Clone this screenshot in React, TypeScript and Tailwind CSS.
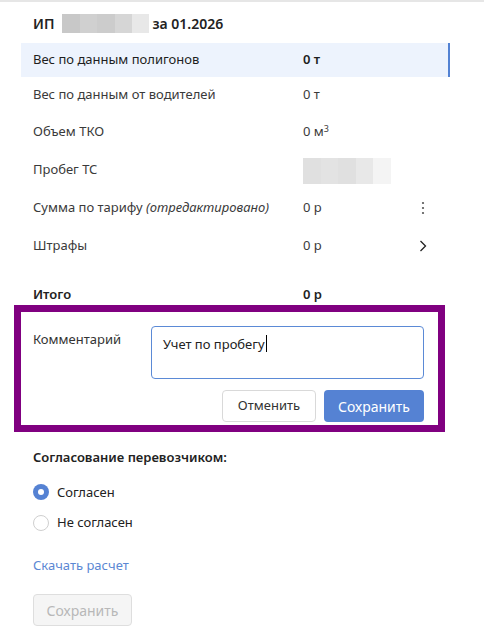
import React from 'react';

const BlurBox: React.FC<{ colors: string[]; className?: string }> = ({ colors, className }) => (
    <span className={`inline-flex ${className ?? ''}`}>
        {colors.map((c, i) => (
            <span key={i} className="h-full flex-1" style={{ backgroundColor: c }} />
        ))}
    </span>
);

interface RowProps {
    label: React.ReactNode;
    value: React.ReactNode;
    action?: React.ReactNode;
    height: string;
    active?: boolean;
}

const Row: React.FC<RowProps> = ({ label, value, action, height, active }) => (
    <div
        className={`flex items-center pl-3 ${height} ${
            active ? 'bg-[#edf3fd] border-r-2 border-[#5382d3] text-[#1e1e1e]' : 'text-[#3a3a3a]'
        }`}
    >
        <div className="w-[270px] shrink-0">{label}</div>
        <div className={`w-[110px] shrink-0 ${active ? 'font-semibold' : ''}`}>{value}</div>
        <div className="flex w-[20px] justify-center">{action}</div>
    </div>
);

const Kebab = () => (
    <svg width="4" height="14" viewBox="0 0 4 14" fill="#555">
        <circle cx="2" cy="2" r="1.1" />
        <circle cx="2" cy="7" r="1.1" />
        <circle cx="2" cy="12" r="1.1" />
    </svg>
);

const Chevron = () => (
    <svg width="8" height="12" viewBox="0 0 8 12" fill="none" stroke="#222" strokeWidth="1.3">
        <path d="M1.5 1 L6.5 6 L1.5 11" />
    </svg>
);

export default function App() {
    return (
        <div
            className="min-h-[633px] w-[484px] border-t-2 border-[#e6e6e6] bg-white text-[13px] text-[#333]"
            style={{ fontFamily: '"Noto Sans", "Open Sans", sans-serif' }}
        >
            <div className="pl-[21px] pt-[10px]">
                {/* header */}
                <div className="flex h-[22px] items-center pl-3 text-[14px] font-semibold text-[#222]">
                    <span>ИП</span>
                    <BlurBox
                        className="ml-[8px] mr-[3px] h-[19px] w-[87px]"
                        colors={['#c8c8c8', '#d0d0d0', '#cccccc', '#d6d6d6', '#e8e8e8']}
                    />
                    <span>за 01.2026</span>
                </div>

                {/* rows */}
                <div className="mt-[9px] w-[429px]">
                    <Row active height="h-[34px]" label="Вес по данным полигонов" value="0 т" />
                    <Row height="h-[36px]" label="Вес по данным от водителей" value="0 т" />
                    <Row
                        height="h-[38px]"
                        label="Объем ТКО"
                        value={
                            <span>
                                0 м<sup className="text-[9px]">3</sup>
                            </span>
                        }
                    />
                    <Row
                        height="h-[38px]"
                        label="Пробег ТС"
                        value={
                            <BlurBox
                                className="mt-[2px] h-[26px] w-[88px] align-middle"
                                colors={['#e0e0e0', '#e3e3e3', '#e0e0e0', '#e8e8e8', '#f4f4f4']}
                            />
                        }
                    />
                    <Row
                        height="h-[38px]"
                        label={
                            <span>
                                Сумма по тарифу <i>(отредактировано)</i>
                            </span>
                        }
                        value="0 р"
                        action={<Kebab />}
                    />
                    <Row height="h-[38px]" label="Штрафы" value="0 р" action={<Chevron />} />
                    <div className="mt-[20px] flex h-[20px] items-center pl-3 font-semibold text-[#222]">
                        <div className="w-[270px]">Итого</div>
                        <div>0 р</div>
                    </div>
                </div>

                {/* comment block */}
                <div className="-ml-[7px] w-[431px] border-[7px] border-[#800080] bg-white">
                    <div className="flex pl-3 pr-[14px] pt-[14px]">
                        <div className="w-[118px] shrink-0 pt-[4px] text-[#333]">Комментарий</div>
                        <div className="flex-1">
                            <div className="h-[53px] rounded-[4px] border border-[#5b8ad6] px-[11px] pt-[8px] text-[#222]">
                                Учет по пробегу<span className="ml-[1px] inline-block h-[17px] w-[1px] -mb-[3px] bg-black" />
                            </div>
                        </div>
                    </div>
                    <div className="flex justify-end gap-2 pb-[3px] pr-[14px] pt-[11px]">
                        <button className="h-[32px] w-[94px] rounded-[4px] border border-[#d9d9d9] bg-white text-[13px] text-[#333]">
                            Отменить
                        </button>
                        <button className="h-[32px] w-[100px] rounded-[4px] bg-[#5582d3] text-[14px] text-white">
                            Сохранить
                        </button>
                    </div>
                </div>

                {/* approval */}
                <div className="pl-3">
                    <div className="mt-[16px] font-semibold text-[#222]">Согласование перевозчиком:</div>
                    <label className="mt-[15px] flex items-center gap-[8px]">
                        <span className="flex h-[16px] w-[16px] items-center justify-center rounded-full bg-[#5582d3]">
                            <span className="h-[6px] w-[6px] rounded-full bg-white" />
                        </span>
                        <span className="text-[#222]">Согласен</span>
                    </label>
                    <label className="mt-[11px] flex items-center gap-[8px]">
                        <span className="h-[16px] w-[16px] rounded-full border border-[#cfcfcf] bg-white" />
                        <span className="text-[#222]">Не согласен</span>
                    </label>
                    <div className="mt-[23px] text-[#5b87d3]">Скачать расчет</div>
                    <button
                        disabled
                        className="mt-[19px] h-[32px] w-[99px] rounded-[4px] border border-[#dedede] bg-[#f5f5f5] text-[14px] text-[#b8b8b8]"
                    >
                        Сохранить
                    </button>
                </div>
            </div>
        </div>
    );
}
